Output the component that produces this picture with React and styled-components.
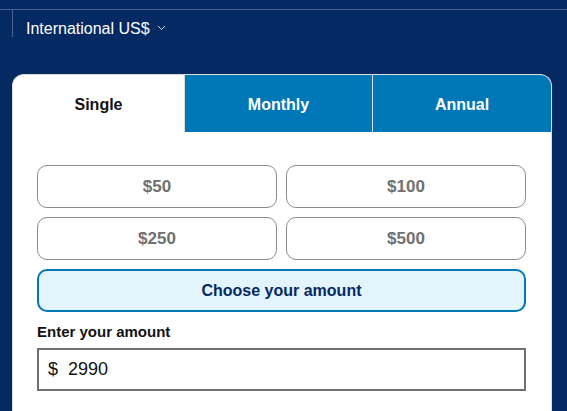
import React from 'react'
import styled, { createGlobalStyle } from 'styled-components'

const GlobalStyle = createGlobalStyle`
  html, body {
    margin: 0;
    background: #052962;
    font-family: "Liberation Sans", Arial, sans-serif;
  }
`;

const tabs = ['Single', 'Monthly', 'Annual'];
const presets = ['$50', '$100', '$250', '$500'];

export default function App() {
    return (
        <Page>
            <GlobalStyle />
            <TopBar>
                <CurrencySelect>
                    International US$
                    <svg width="9" height="6" viewBox="0 0 9 6">
                        <path d="M1 1 L4.5 4.5 L8 1" fill="none" stroke="#c9d3e6" strokeWidth="1" />
                    </svg>
                </CurrencySelect>
            </TopBar>
            <Card>
                <Tabs>
                    {tabs.map((t, i) => (
                        <Tab key={t} active={i === 0}>{t}</Tab>
                    ))}
                </Tabs>
                <Body>
                    <PresetGrid>
                        {presets.map((p) => (
                            <Preset key={p}>{p}</Preset>
                        ))}
                    </PresetGrid>
                    <ChooseButton>Choose your amount</ChooseButton>
                    <Label htmlFor="amount">Enter your amount</Label>
                    <AmountField>
                        <Currency>$</Currency>
                        <AmountInput id="amount" defaultValue="2990" />
                    </AmountField>
                </Body>
            </Card>
        </Page>
    )
}

const Page = styled.div`
  padding-top: 9px;
  min-height: 411px;
  box-sizing: border-box;
`;

const TopBar = styled.div`
  border-top: 1px solid #4a6496;
  height: 27px;
`;

const CurrencySelect = styled.div`
  margin-left: 12px;
  height: 27px;
  border-left: 1px solid #4a6496;
  padding: 9px 0 0 13px;
  box-sizing: border-box;
  color: #fff;
  font-size: 16px;
  line-height: 20px;
  display: flex;
  align-items: flex-start;
  gap: 7px;
  white-space: nowrap;
  svg {
    margin-top: 6px;
  }
`;

const Card = styled.div`
  margin: 37px 15px 0 12px;
  background: #fff;
  border: 1px solid #dcdcdc;
  border-bottom: none;
  border-radius: 12px 12px 0 0;
  overflow: hidden;
`;

const Tabs = styled.div`
  display: grid;
  grid-template-columns: 171px 188px 1fr;
  height: 57px;
`;

const Tab = styled.div`
  display: flex;
  align-items: center;
  justify-content: center;
  font-size: 16px;
  font-weight: bold;
  padding-top: 2px;
  background: ${(p) => (p.active ? '#fff' : '#0077b6')};
  color: ${(p) => (p.active ? '#121212' : '#fff')};
  & + & {
    border-left: 1px solid #dcdcdc;
  }
`;

const Body = styled.div`
  padding: 33px 25px 20px 24px;
  display: flex;
  flex-direction: column;
`;

const PresetGrid = styled.div`
  display: grid;
  grid-template-columns: 1fr 1fr;
  grid-auto-rows: 43px;
  gap: 9px;
`;

const Preset = styled.button`
  background: #fff;
  border: 1px solid #8c8c8c;
  border-radius: 10px;
  color: #707070;
  font-family: inherit;
  font-size: 17px;
  font-weight: bold;
`;

const ChooseButton = styled.button`
  margin-top: 9px;
  height: 43px;
  background: #e3f4fd;
  border: 2px solid #0077b6;
  border-radius: 10px;
  color: #052962;
  font-family: inherit;
  font-size: 16px;
  font-weight: bold;
`;

const Label = styled.label`
  margin-top: 10px;
  line-height: 20px;
  font-size: 15px;
  font-weight: bold;
  color: #121212;
`;

const AmountField = styled.div`
  margin-top: 6px;
  height: 43px;
  box-sizing: border-box;
  border: 2px solid #707070;
  display: flex;
  align-items: center;
  padding-left: 9px;
  gap: 10px;
  color: #121212;
  font-size: 18px;
`;

const Currency = styled.span``;

const AmountInput = styled.input`
  border: none;
  outline: none;
  padding: 0;
  flex: 1;
  font-family: inherit;
  font-size: 18px;
  color: #121212;
  background: transparent;
`;
